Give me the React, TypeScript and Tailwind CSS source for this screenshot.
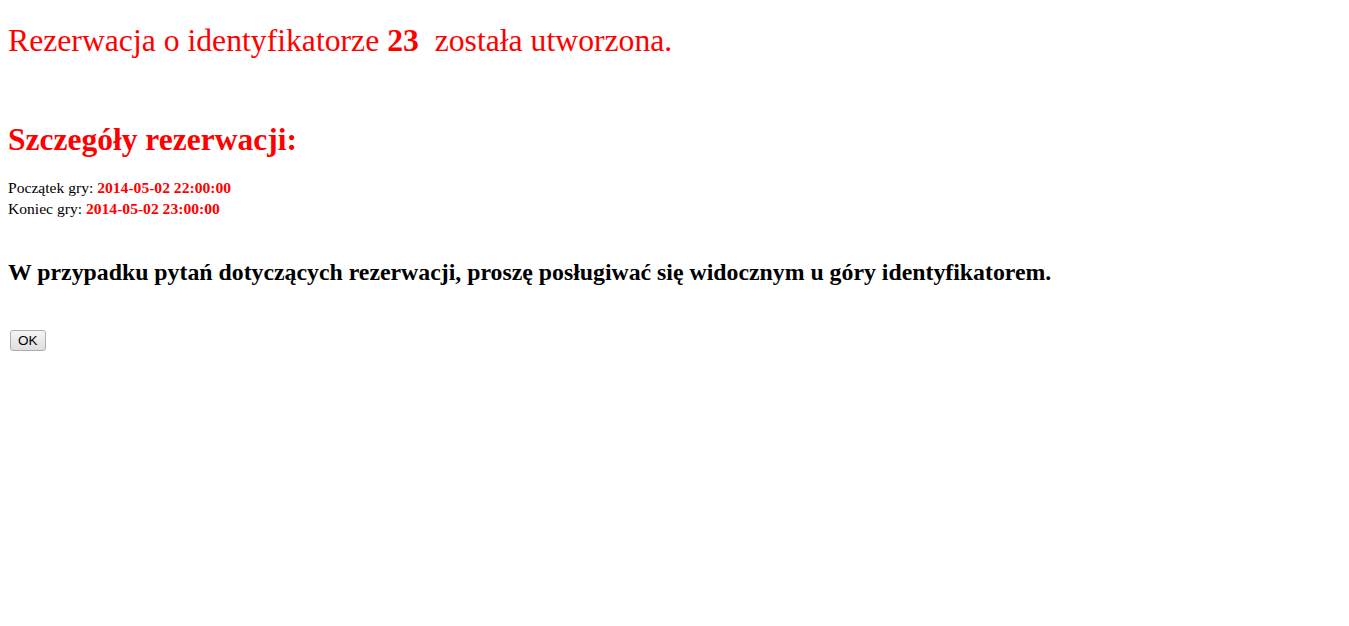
export default function App() {
  return (
    <div className="min-h-screen bg-white p-2 font-['Liberation_Serif',serif] text-black">
      <p className="mt-[15px] text-[31.7px] leading-[36px] text-[#ff0000]">
        Rezerwacja o identyfikatorze <b>23</b>&nbsp; została utworzona.
      </p>
      <h2 className="mt-[63px] text-[31.5px] font-bold leading-[36px] text-[#ff0000]">Szczegóły rezerwacji:</h2>
      <div className="mt-[19px] text-[15.6px] leading-[21px]">
        <div>
          Początek gry: <b className="text-[#ff0000]">2014-05-02 22:00:00</b>
        </div>
        <div>
          Koniec gry: <b className="text-[#ff0000]">2014-05-02 23:00:00</b>
        </div>
      </div>
      <h3 className="mt-[39px] text-[23.8px] font-bold leading-[28px]">
        W przypadku pytań dotyczących rezerwacji, proszę posługiwać się widocznym u góry identyfikatorem.
      </h3>
      <div className="mt-[42px] pl-[2px]">
        <button className="h-[21px] rounded-[3px] border border-[#adadad] bg-gradient-to-b from-[#f6f6f6] to-[#dedede] px-[7px] font-['Liberation_Sans',sans-serif] text-[13.5px] leading-[19px] text-black">
          OK
        </button>
      </div>
    </div>
  );
}
